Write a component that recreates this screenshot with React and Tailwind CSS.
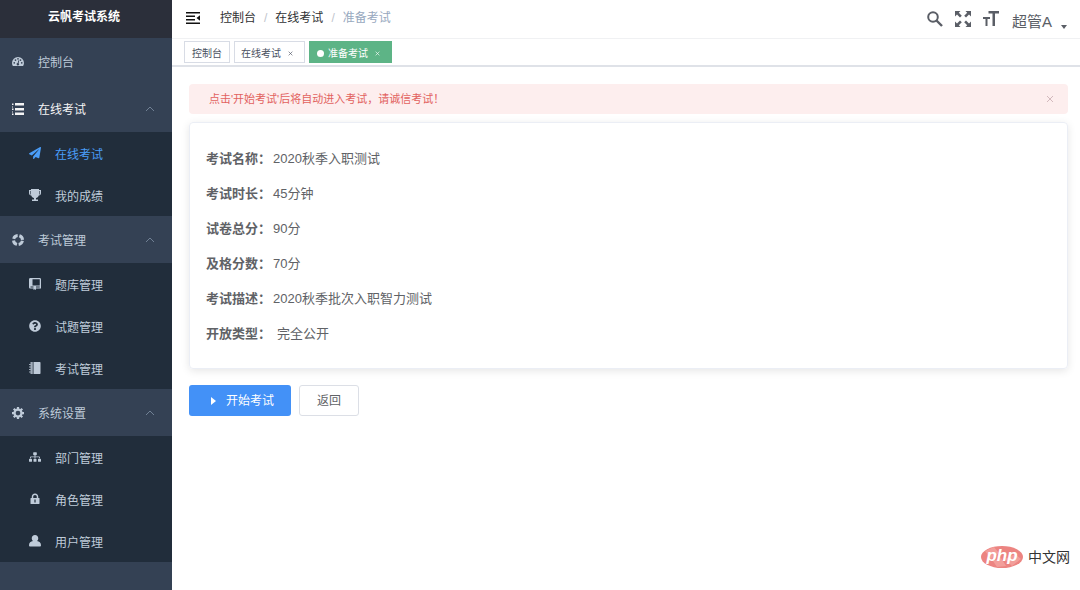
import { FaPaperPlane, FaQuestionCircle, FaSitemap } from 'react-icons/fa';

function Svg({ children, className = 'h-3 w-3' }) {
    return (
        <svg viewBox="0 0 24 24" fill="currentColor" className={className} aria-hidden="true">
            {children}
        </svg>
    );
}

function DashboardIcon() {
    return (
        <Svg>
            <path
                fillRule="evenodd"
                d="M12 2a12 12 0 0 0-12 12c0 2.300.7 4.500 1.800 6.200h20.400A12 12 0 0 0 24 14 12 12 0 0 0 12 2zM4.500 12a1.700 1.700 0 1 1 0 3.400 1.700 1.700 0 0 1 0-3.400zM7 6.500a1.700 1.700 0 1 1 0 3.400 1.700 1.700 0 0 1 0-3.400zM12 4a1.700 1.700 0 1 1 0 3.400A1.700 1.700 0 0 1 12 4zM17 6.500a1.700 1.700 0 1 1 0 3.400 1.700 1.700 0 0 1 0-3.400zM19.500 12a1.700 1.700 0 1 1 0 3.400 1.700 1.700 0 0 1 0-3.400zM12.800 8.500l1.700.5-1.300 5.300a2.500 2.500 0 1 1-1.800-.5z"
            />
        </Svg>
    );
}

function ListIcon() {
    return (
        <Svg>
            <path d="M0 1h3v3H0zM6 0h18v5H6zM0 7h2v2H0zM0 11h3v3H0zM6 10h18v5H6zM0 17h2v2H0zM0 21h3v3H0zM6 19h18v5H6z" />
        </Svg>
    );
}

function TrophyIcon() {
    return (
        <Svg>
            <path d="M4 0h16v2h4v6c0 3-1.500 4.500-4.500 5-1 2.500-3 4.500-5.500 5v3h4v3H6v-3h4v-3c-2.500-.5-4.500-2.500-5.500-5C1.500 12.500 0 11 0 8V2h4z" />
            <path d="M3 4v7M21 4v7" stroke="#212d3b" strokeWidth="1.200" />
        </Svg>
    );
}

function RingIcon() {
    return (
        <Svg>
            <circle
                cx="12"
                cy="12"
                r="9"
                fill="none"
                stroke="currentColor"
                strokeWidth="6"
                strokeDasharray="10.600 3.537"
                strokeDashoffset="-1.768"
            />
        </Svg>
    );
}

function BookIcon() {
    return (
        <Svg>
            <path
                fillRule="evenodd"
                d="M3 0h18c2 0 3 1 3 3v18H14v3l-2.500-1.500L9 24v-3H3c-2 0-3-1-3-3V3c0-2 1-3 3-3zM7 2.500V15h14.500V2.500zM3 17v2h6v-2zM14 17v2h7.500v-2z"
            />
        </Svg>
    );
}

function NotebookIcon() {
    return (
        <Svg>
            <path d="M9 0h12c1.500 0 2 .7 2 2v20c0 1.300-.5 2-2 2H9z" />
            <path d="M3 0h4.500v24H3v-3H0v-2h3v-3H0v-2h3v-3H0V9h3V6H0V4h3z" opacity=".8" />
        </Svg>
    );
}

function GearIcon() {
    return (
        <Svg>
            <circle cx="12" cy="12" r="7" fill="none" stroke="currentColor" strokeWidth="4.500" />
            <path
                d="M12 0v5M12 19v5M0 12h5M19 12h5M3.500 3.500L7 7M17 17l3.500 3.500M3.500 20.500L7 17M17 7l3.500-3.500"
                stroke="currentColor"
                strokeWidth="4.500"
            />
        </Svg>
    );
}

function LockIcon() {
    return (
        <Svg>
            <path
                fillRule="evenodd"
                d="M12 1c-4 0-6.500 3-6.500 6.500V10H4c-.7 0-1 .4-1 1v10c0 .7.4 1 1 1h16c.7 0 1-.4 1-1V11c0-.7-.4-1-1-1h-1.500V7.500C18.500 4 16 1 12 1zm0 3c2.200 0 3.500 1.500 3.500 3.500V10h-7V7.500C8.500 5.500 9.800 4 12 4zm-1.200 9h2.400v6h-2.400z"
            />
        </Svg>
    );
}

function UserIcon() {
    return (
        <Svg>
            <path d="M12 0c4 0 6.500 2.600 6.500 6.500 0 2.300-1 4.500-2.500 5.700 4.500.8 8 3.500 8 8.300 0 1.800-1 2.500-2.500 2.500h-19C1 23 0 22.300 0 20.500c0-4.800 3.500-7.500 8-8.300-1.500-1.200-2.500-3.400-2.500-5.700C5.500 2.600 8 0 12 0z" />
        </Svg>
    );
}

const menu = [
    { label: '控制台', icon: <DashboardIcon /> },
    {
        label: '在线考试',
        icon: <ListIcon />,
        open: true,
        children: [
            { label: '在线考试', icon: <FaPaperPlane className="h-3 w-3" />, active: true },
            { label: '我的成绩', icon: <TrophyIcon /> },
        ],
    },
    {
        label: '考试管理',
        icon: <RingIcon />,
        children: [
            { label: '题库管理', icon: <BookIcon /> },
            { label: '试题管理', icon: <FaQuestionCircle className="h-3 w-3" /> },
            { label: '考试管理', icon: <NotebookIcon /> },
        ],
    },
    {
        label: '系统设置',
        icon: <GearIcon />,
        children: [
            { label: '部门管理', icon: <FaSitemap className="h-3 w-3" /> },
            { label: '角色管理', icon: <LockIcon /> },
            { label: '用户管理', icon: <UserIcon /> },
        ],
    },
];

const details = [
    { label: '考试名称：', value: '2020秋季入职测试' },
    { label: '考试时长：', value: '45分钟' },
    { label: '试卷总分：', value: '90分' },
    { label: '及格分数：', value: '70分' },
    { label: '考试描述：', value: '2020秋季批次入职智力测试' },
    { label: '开放类型：', value: '完全公开', spaced: true },
];

function Sidebar() {
    return (
        <aside className="w-[172px] shrink-0 bg-[#344154] text-xs text-[#bfcbd9]">
            <h1 className="flex h-[38px] items-center justify-center bg-[#2b2f3a] pb-1 pr-1 font-bold text-white">
                云帆考试系统
            </h1>
            <nav>
                {menu.map((item) => (
                    <div key={item.label}>
                        <button
                            type="button"
                            className={`flex h-[47px] w-full items-center pl-3 pr-4 pt-px text-left ${item.open ? 'text-[#f4f4f5]' : ''}`}
                        >
                            {item.icon}
                            <span className="ml-[14px] flex-1 pt-[2px]">{item.label}</span>
                            {item.children && (
                                <svg viewBox="0 0 10 6" className="mr-px h-[6px] w-[10px]" fill="none" stroke="#708094">
                                    <path d="M1 5l4-4 4 4" />
                                </svg>
                            )}
                        </button>
                        {item.children && (
                            <div className="bg-[#212d3b]">
                                {item.children.map((child) => (
                                    <a
                                        key={child.label}
                                        href="#"
                                        className={`flex h-[42px] items-center gap-[14px] pl-[29px] ${child.active ? 'text-[#4a9df8]' : ''}`}
                                    >
                                        {child.icon}
                                        <span className="pt-[3px]">{child.label}</span>
                                    </a>
                                ))}
                            </div>
                        )}
                    </div>
                ))}
            </nav>
        </aside>
    );
}

function Navbar() {
    return (
        <header className="flex h-[39px] items-center justify-between border-b border-[#f0f1f3] pl-[14px] pr-3">
            <div className="flex items-center pb-[3px]">
                <button type="button" aria-label="折叠菜单">
                    <svg viewBox="0 0 14 12" className="h-3 w-[14px]" fill="#111">
                        <path d="M0 0h14v1.500H0zM0 3.600h9v1.500H0zM0 7h9v1.500H0zM0 10.500h14V12H0zM14 3.200v5.600L10.500 6z" />
                    </svg>
                </button>
                <nav className="ml-5 flex gap-2 text-xs text-[#303133]">
                    <a href="#">控制台</a>
                    <span className="text-[#c0c4cc]">/</span>
                    <a href="#">在线考试</a>
                    <span className="text-[#c0c4cc]">/</span>
                    <span className="text-[#97a8be]">准备考试</span>
                </nav>
            </div>
            <div className="flex items-center text-[#5a5e66]">
                <button type="button" aria-label="搜索">
                    <svg viewBox="0 0 16 16" className="h-4 w-4" fill="none" stroke="currentColor" strokeWidth="2">
                        <circle cx="6" cy="6" r="4.800" />
                        <path d="M9.500 9.500l5.500 5.500" strokeWidth="2.400" />
                    </svg>
                </button>
                <button type="button" aria-label="全屏" className="ml-3">
                    <svg viewBox="0 0 16 16" className="h-4 w-4" fill="currentColor">
                        <path d="M0 0h5.500L3.800 1.700l3 3-1.800 1.800-3-3L0 5.500zM16 0v5.500L14 3.500l-3 3-1.800-1.800 3-3L10.500 0zM0 16v-5.500l2 2 3-3 1.800 1.800-3 3L5.500 16zM16 16h-5.500l1.700-1.700-3-3L11 9.500l3 3 2-2z" />
                    </svg>
                </button>
                <button type="button" aria-label="字体大小" className="ml-3">
                    <svg viewBox="0 0 16 16" className="h-4 w-4" fill="currentColor">
                        <path d="M5.500 0H16v2.500h-4V15H9.500V2.500h-4zM0 6h7v2H4.500v7h-2V8H0z" />
                    </svg>
                </button>
                <button type="button" className="ml-[13px] flex items-end pt-[6px] text-[15px]">
                    超管A
                    <svg viewBox="0 0 8 4" className="mb-1 ml-2 h-1 w-2" fill="currentColor">
                        <path d="M1 0h6L4 4z" />
                    </svg>
                </button>
            </div>
        </header>
    );
}

function CloseIcon({ className }) {
    return (
        <svg viewBox="0 0 8 8" className={className} fill="none" stroke="currentColor" strokeWidth="1">
            <path d="M1 1l6 6M7 1L1 7" />
        </svg>
    );
}

function Tabs() {
    return (
        <nav className="flex h-7 items-center gap-1 border-b-2 border-[#dfe2e8] pl-3 text-[10px] text-[#495060]">
            <a href="#" className="flex h-[22px] items-center border border-[#d8dce5] px-[7px] pt-[2px]">
                控制台
            </a>
            <a href="#" className="flex h-[22px] items-center border border-[#d8dce5] pl-[6px] pr-[11px] pt-[2px]">
                在线考试
                <CloseIcon className="ml-[7px] h-[5px] w-[5px]" />
            </a>
            <a
                href="#"
                className="flex h-[22px] items-center border border-[#5db486] bg-[#5db486] pl-[7px] pr-[11px] pt-[2px] text-white"
            >
                <span className="mr-1 h-[7px] w-[7px] rounded-full bg-white" />
                准备考试
                <CloseIcon className="ml-[7px] h-[5px] w-[5px]" />
            </a>
        </nav>
    );
}

function Watermark() {
    return (
        <div className="absolute bottom-[22px] right-[10px] flex items-center gap-[5px] text-sm text-[#333]">
            <svg viewBox="0 0 42 22" className="h-[22px] w-[42px]">
                <ellipse cx="21" cy="11" rx="21" ry="11" fill="#ec8481" />
                <path d="M4 5l9-4 5 6-8 6zM24 13l10-5 6 5-9 7zM12 15l8-3 5 8-9 1z" fill="#f5aaa5" opacity=".7" />
                <text
                    x="21"
                    y="15"
                    textAnchor="middle"
                    fill="#fff"
                    className="font-['Liberation_Sans',sans-serif] text-[17px] font-bold italic"
                >
                    php
                </text>
            </svg>
            中文网
        </div>
    );
}

export default function App() {
    return (
        <div className="relative flex min-h-screen bg-white font-['Liberation_Sans','Noto_Sans_CJK_SC',sans-serif]">
            <Sidebar />
            <div className="min-w-0 flex-1">
                <Navbar />
                <Tabs />
                <main className="pl-[17px] pr-3 pt-[17px]">
                    <div
                        role="alert"
                        className="flex h-[30px] items-center justify-between rounded-sm bg-[#fdeeee] pl-5 pr-[14px] text-[11px] text-[#e2625f]"
                    >
                        点击'开始考试'后将自动进入考试，请诚信考试！
                        <button type="button" aria-label="关闭" className="text-[#d3b9bd]">
                            <CloseIcon className="h-2 w-2" />
                        </button>
                    </div>
                    <dl className="mt-2 flex flex-col gap-[15px] rounded-sm border border-[#ebeef5] px-4 pb-6 pt-[26px] text-[13px] leading-5 text-[#606266] shadow-[0_2px_9px_rgba(0,0,0,0.1)]">
                        {details.map((row) => (
                            <div key={row.label} className="flex">
                                <dt className="font-bold">{row.label}</dt>
                                <dd className={row.spaced ? 'ml-[6px]' : 'ml-[2px]'}>{row.value}</dd>
                            </div>
                        ))}
                    </dl>
                    <div className="mt-4 flex gap-2 text-xs">
                        <button
                            type="button"
                            className="flex h-[31px] items-center gap-[10px] rounded-[3px] bg-[#4391f7] pl-[21px] pr-[17px] text-white"
                        >
                            <svg viewBox="0 0 6 8" className="h-2 w-[6px]" fill="currentColor">
                                <path d="M1 0l5 4-5 4z" />
                            </svg>
                            开始考试
                        </button>
                        <button
                            type="button"
                            className="h-[31px] rounded-[3px] border border-[#dcdfe6] px-[17px] text-[#606266]"
                        >
                            返回
                        </button>
                    </div>
                </main>
            </div>
            <Watermark />
        </div>
    );
}
